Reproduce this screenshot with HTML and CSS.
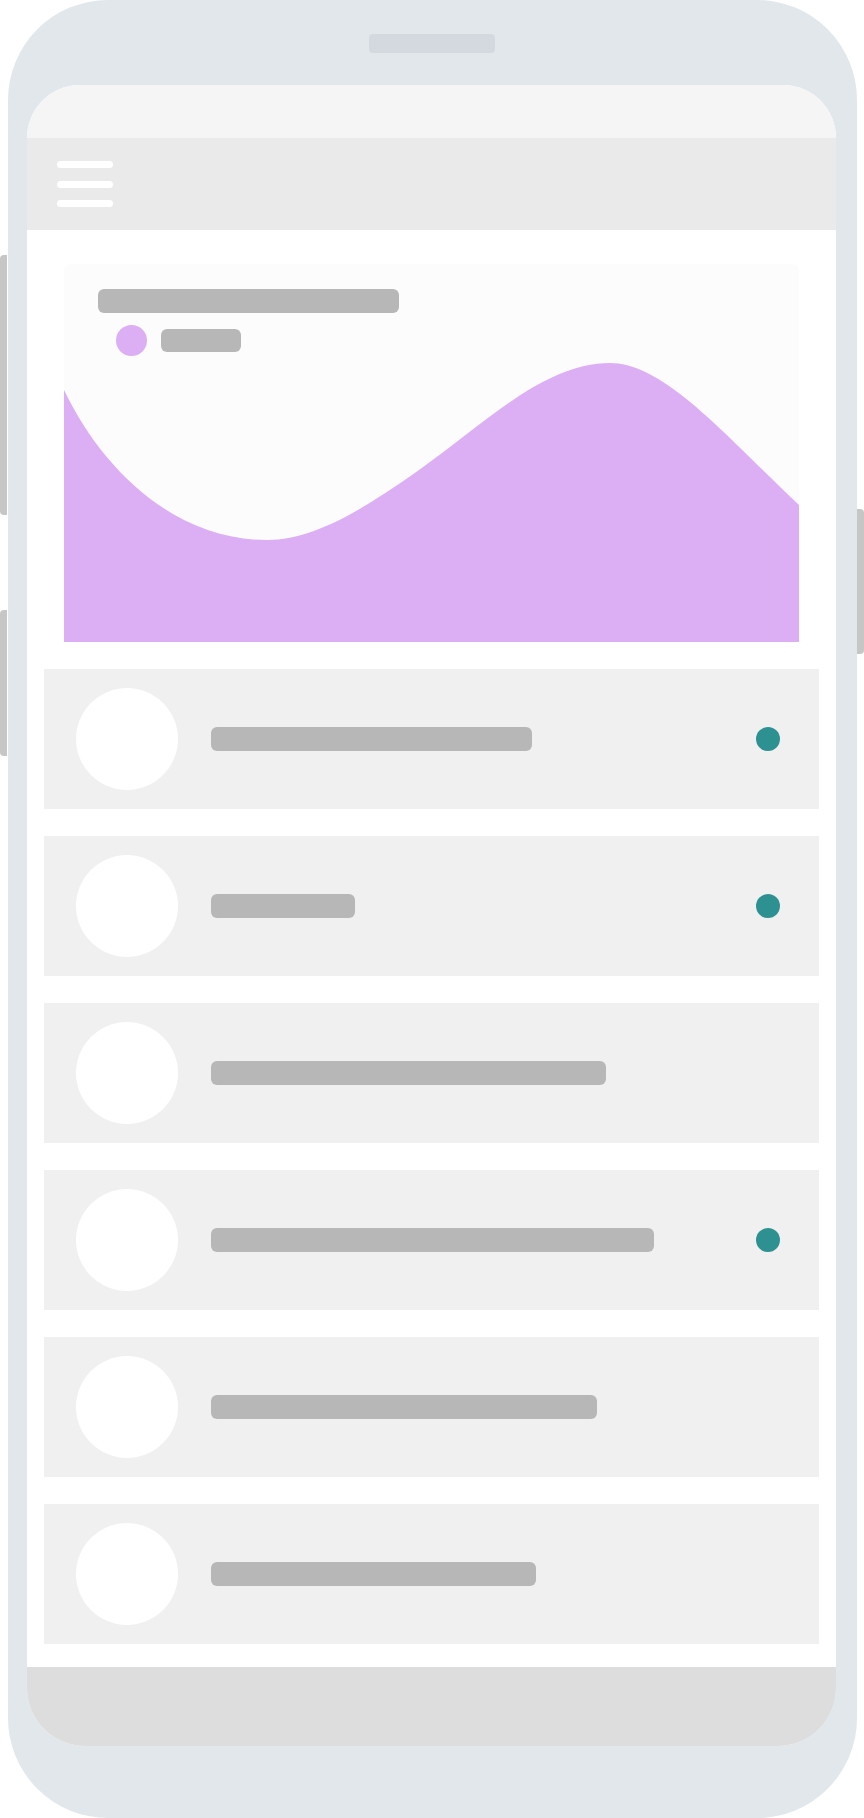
FILE: index.html
```html
<!DOCTYPE html>
<html>
    <head>
        <meta charset="UTF-8">
        <title>Dashboard mockup</title>
        <link rel="stylesheet" href="styles.css">
    </head>

    <body>
        <div class="side side-left">
            <div class="side-btn btn-volume"></div>
            <div class="side-btn btn-lock"></div>
        </div>

        <div class="phone">
            <div class="speaker"></div>

            <div class="screen">
                <div class="status-bar"></div>

                <header class="app-bar">
                    <div class="menu-line"></div>
                    <div class="menu-line"></div>
                    <div class="menu-line"></div>
                </header>

                <main class="content">
                    <section class="chart-card">
                        <svg class="chart" viewBox="0 0 735 378" width="735" height="378">
                            <path d="M0,126 C38,205 110,276 203,276 C250,276 300,245 355,206 C420,160 480,99 546,99 C600,99 660,170 735,241 L735,378 L0,378 Z" fill="#dcaff5"/>
                        </svg>
                        <div class="chart-head">
                            <div class="skeleton chart-title"></div>
                            <div class="legend">
                                <span class="legend-dot"></span>
                                <span class="skeleton legend-label"></span>
                            </div>
                        </div>
                    </section>

                    <ul class="list">
                        <li class="item">
                            <div class="avatar"></div>
                            <div class="skeleton line" style="width: 321px"></div>
                            <div class="status-dot"></div>
                        </li>
                        <li class="item">
                            <div class="avatar"></div>
                            <div class="skeleton line" style="width: 144px"></div>
                            <div class="status-dot"></div>
                        </li>
                        <li class="item">
                            <div class="avatar"></div>
                            <div class="skeleton line" style="width: 395px"></div>
                        </li>
                        <li class="item">
                            <div class="avatar"></div>
                            <div class="skeleton line" style="width: 443px"></div>
                            <div class="status-dot"></div>
                        </li>
                        <li class="item">
                            <div class="avatar"></div>
                            <div class="skeleton line" style="width: 386px"></div>
                        </li>
                        <li class="item">
                            <div class="avatar"></div>
                            <div class="skeleton line" style="width: 325px"></div>
                        </li>
                    </ul>
                </main>

                <footer class="nav-bar"></footer>
            </div>
        </div>

        <div class="side side-right">
            <div class="side-btn btn-power"></div>
        </div>
    </body>
</html>
```

FILE: styles.css
```css
* {
    margin: 0;
    padding: 0;
    box-sizing: border-box;
}

body {
    background: #ffffff;
    font-family: 'Liberation Sans', Arial, sans-serif;
    display: flex;
    align-items: flex-start;
    width: 864px;
}

/* side buttons */
.side {
    display: flex;
    flex-direction: column;
}

.side-left {
    width: 8px;
    padding-top: 255px;
}

.side-right {
    width: 7px;
    padding-top: 509px;
}

.side-btn {
    background: #c6c6c6;
    width: 7px;
}

.side-left .side-btn {
    border-radius: 4px 0 0 4px;
}

.btn-volume {
    height: 260px;
}

.btn-lock {
    margin-top: 95px;
    height: 146px;
}

.btn-power {
    height: 145px;
    border-radius: 0 4px 4px 0;
}

/* phone body */
.phone {
    width: 849px;
    height: 1818px;
    background: #e2e7eb;
    border-radius: 100px;
    display: flex;
    flex-direction: column;
    align-items: center;
    padding: 34px 21px 72px 19px;
}

.speaker {
    width: 126px;
    height: 19px;
    background: #d4d9df;
    border-radius: 4px;
}

.screen {
    margin-top: 32px;
    width: 809px;
    height: 1661px;
    background: #ffffff;
    border-radius: 53px 53px 58px 58px;
    overflow: hidden;
    display: flex;
    flex-direction: column;
}

.status-bar {
    height: 53px;
    background: #f5f5f5;
}

.app-bar {
    height: 92px;
    background: #eaeaea;
    padding: 23px 0 0 30px;
    display: flex;
    flex-direction: column;
    gap: 12.5px;
}

.menu-line {
    width: 56px;
    height: 7px;
    background: #ffffff;
    border-radius: 4px;
}

.content {
    flex: 1;
    padding: 34px 17px 23px;
}

.skeleton {
    background: #b7b7b7;
    border-radius: 6px;
}

/* chart */
.chart-card {
    display: grid;
    width: 735px;
    height: 378px;
    margin-left: 20px;
    background: #fcfcfc;
    border-radius: 6px 6px 0 0;
}

.chart-card > * {
    grid-area: 1 / 1;
}

.chart {
    display: block;
}

.chart-head {
    padding: 25px 0 0 34px;
}

.chart-title {
    width: 301px;
    height: 24px;
}

.legend {
    display: flex;
    align-items: center;
    gap: 14px;
    margin: 12px 0 0 18px;
}

.legend-dot {
    width: 31px;
    height: 31px;
    border-radius: 50%;
    background: #dcaff5;
}

.legend-label {
    width: 80px;
    height: 23px;
}

/* list */
.list {
    list-style: none;
    margin-top: 27px;
    display: flex;
    flex-direction: column;
    gap: 27px;
}

.item {
    height: 140px;
    background: #f0f0f0;
    display: flex;
    align-items: center;
    padding: 0 39px 0 32px;
}

.avatar {
    width: 102px;
    height: 102px;
    border-radius: 50%;
    background: #ffffff;
    flex-shrink: 0;
}

.line {
    height: 24px;
    margin-left: 33px;
}

.status-dot {
    width: 24px;
    height: 24px;
    border-radius: 50%;
    background: #2e9191;
    margin-left: auto;
}

.nav-bar {
    height: 79px;
    background: #dddddd;
}
```
